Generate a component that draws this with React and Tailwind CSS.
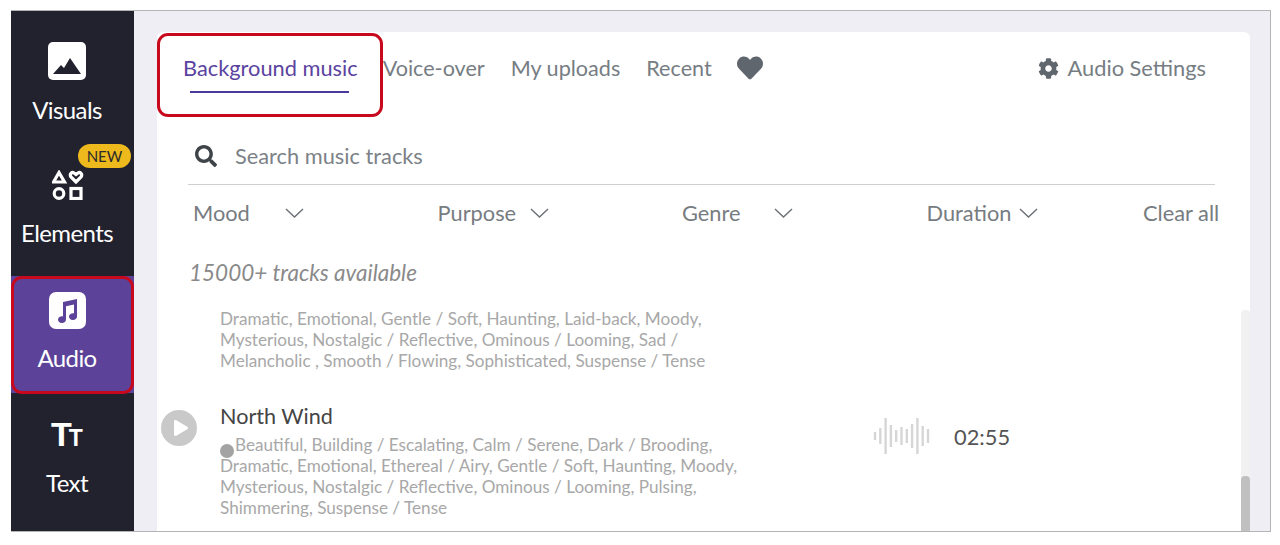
import { FaCog, FaHeart, FaSearch, FaPlay } from 'react-icons/fa';

function Chevron() {
  return (
    <svg width="19" height="10" viewBox="0 0 19 10" fill="none" stroke="#6b7076" strokeWidth="1.4">
      <path d="M1 1l8.5 8L18 1" />
    </svg>
  );
}

function VisualsIcon() {
  return (
    <svg width="38" height="38" viewBox="0 0 38 38">
      <rect width="38" height="38" rx="5" fill="#fff" />
      <path d="M5 32l8-9 3 3 6-10 11 16z" fill="#22222e" />
    </svg>
  );
}

function ElementsIcon() {
  return (
    <svg width="32" height="30" viewBox="0 0 32 30" fill="none" stroke="#fff" strokeWidth="3.2" className="translate-x-[1px]">
      <path d="M7 2.5L12.5 12h-11z" />
      <path d="M24 12l-5-5c-2-3 1-5.5 3-4l2 1.5 2-1.5c2-1.500 5 1 3 4z" />
      <circle cx="7" cy="23.500" r="4.800" />
      <rect x="19" y="18.500" width="10" height="10" />
    </svg>
  );
}

function AudioIcon() {
  return (
    <svg width="37" height="37" viewBox="0 0 37 37">
      <rect width="37" height="37" rx="7" fill="#fff" />
      <path
        d="M14 10l14-3v17.500a4 3.400 0 1 1-3-3.200V12.400l-8 1.800v13.300a4 3.400 0 1 1-3-3.200z"
        fill="#5c4399"
      />
    </svg>
  );
}

function TextIcon() {
  return (
    <span className="flex items-baseline font-['Liberation_Sans',sans-serif] font-bold leading-[26px] text-white">
      <span className="text-[34px] tracking-[-3px]">T</span>
      <span className="text-[23px]">T</span>
    </span>
  );
}

function SideItem({ icon, label, active, badge, slot }) {
  return (
    <div
      className={`relative flex h-[117px] flex-col items-center pr-[11px] text-white ${active ? 'bg-[#5c4399]' : ''}`}
    >
      <div className={`flex items-end justify-center ${slot}`}>{icon}</div>
      <div className="mt-[14px] text-[24px] leading-[26px] tracking-[-0.6px]">{label}</div>
      {badge && (
        <span className="absolute right-[3px] top-[-7px] flex h-[24px] w-[53px] items-center justify-center rounded-full bg-[#eeb91c] text-[15px] text-[#2b2b2b]">
          {badge}
        </span>
      )}
    </div>
  );
}

function Filter({ label }) {
  return (
    <div className="flex w-[244.5px] items-center">
      <span className="w-[92px] shrink-0">{label}</span>
      <Chevron />
    </div>
  );
}

function Wave() {
  const bars = [8, 16, 36, 22, 12, 18, 14, 24, 36, 20, 14];
  return (
    <svg width="57" height="38" viewBox="0 0 57 38" stroke="#d6d6d6" strokeWidth="2.4">
      {bars.map((h, i) => (
        <line key={i} x1={2 + i * 5.3} x2={2 + i * 5.3} y1={19 - h / 2} y2={19 + h / 2} />
      ))}
    </svg>
  );
}

export default function App() {
  return (
    <div className="h-[545px] bg-white pl-[11px] pt-[10px] font-['Lato','Liberation_Sans',sans-serif]">
      <div className="relative flex h-[522px] w-[1260px] border-y border-r border-[#b4b4b4]">
        <aside className="flex w-[123px] shrink-0 flex-col gap-[8px] bg-[#22222e] pt-[15px]">
          <SideItem icon={<VisualsIcon />} label="Visuals" slot="h-[57px] pb-[3px]" />
          <SideItem icon={<ElementsIcon />} label="Elements" badge="NEW" slot="h-[55px] pb-[6px]" />
          <SideItem icon={<AudioIcon />} label="Audio" active slot="h-[55px] pb-[2px]" />
          <SideItem icon={<TextIcon />} label="Text" slot="h-[55px] pb-[5px]" />
        </aside>

        <main className="flex min-w-0 flex-1 bg-[#eeeef4] pl-[23px] pr-[20px] pt-[21px]">
          <div className="flex min-w-0 flex-1 rounded-t-md bg-white">
            <div className="min-w-0 flex-1">
              <nav className="flex h-[63px] items-center pl-[26px] pr-[35px] pt-[9px] text-[21.6px] text-[#767d83]">
                <div className="relative mr-[25px] text-[21.8px] text-[#5b43a0]">
                  Background music
                  <span className="absolute left-[7px] top-[39px] h-[2px] w-[159px] bg-[#4b3a9c]" />
                </div>
                <span className="mr-[26px]">Voice-over</span>
                <span className="mr-[26px]">My uploads</span>
                <span className="mr-[25px]">Recent</span>
                <FaHeart size={26} className="text-[#5f666d]" />
                <span className="ml-auto flex items-center gap-[9px] text-[21.8px]">
                  <FaCog size={21} className="text-[#5f666d]" />
                  Audio Settings
                </span>
              </nav>

              <div className="mx-[31px] mt-[33px] flex h-[57px] w-[1027px] items-center gap-[18px] border-b border-[#cfcfcf] pl-[7px] text-[21.8px] text-[#7c8287]">
                <FaSearch size={22} className="text-[#3f4449]" />
                Search music tracks
              </div>

              <div className="ml-[36px] flex h-[56px] items-center text-[21.8px] text-[#777c81]">
                <Filter label="Mood" />
                <Filter label="Purpose" />
                <Filter label="Genre" />
                <Filter label="Duration" />
                <span className="ml-[-28px]">Clear all</span>
              </div>

              <p className="ml-[32px] mt-[19px] text-[22.5px] italic leading-[26px] text-[#8a8a8a]">
                15000+ tracks available
              </p>

              <p className="ml-[63px] mt-[22px] w-[505px] text-[17.15px] leading-[21px] text-[#a8a8a8]">
                Dramatic, Emotional, Gentle / Soft, Haunting, Laid-back, Moody, Mysterious, Nostalgic / Reflective, Ominous / Looming, Sad / Melancholic , Smooth / Flowing, Sophisticated, Suspense / Tense
              </p>

              <div className="mt-[31px] flex">
                <div className="ml-[4px] mt-[8px] flex h-[36px] w-[36px] shrink-0 items-center justify-center rounded-full bg-[#c9c9c9] pl-[3px]">
                  <FaPlay size={16} className="text-white" />
                </div>
                <div className="ml-[23px] w-[530px] shrink-0">
                  <h3 className="text-[21.6px] leading-[28px] text-[#444]">North Wind</h3>
                  <p className="mt-[4px] text-[17.15px] leading-[21px] text-[#a8a8a8]">
                    <span className="mr-px inline-block h-[14px] w-[14px] translate-y-[7px] rounded-full bg-[#a3a3a3]" />
                    Beautiful, Building / Escalating, Calm / Serene, Dark / Brooding, Dramatic, Emotional, Ethereal / Airy, Gentle / Soft, Haunting, Moody, Mysterious, Nostalgic / Reflective, Ominous / Looming, Pulsing, Shimmering, Suspense / Tense
                  </p>
                </div>
                <div className="ml-[123px] mt-[15px] shrink-0">
                  <Wave />
                </div>
                <span className="ml-[24px] mt-[21px] text-[21.8px] leading-[28px] text-[#555]">02:55</span>
              </div>
            </div>

            <div className="mt-[278px] flex w-[9px] shrink-0 flex-col justify-end rounded-t bg-[#f1f1f1]">
              <div className="h-[55px] rounded-t bg-[#c0c0c0]" />
            </div>
          </div>
        </main>

        {/* red highlight boxes */}
        <div className="absolute left-[146px] top-[22px] h-[84px] w-[226px] rounded-[11px] border-[3px] border-[#c8081c]" />
        <div className="absolute left-0 top-[265px] h-[118px] w-[123px] rounded-[11px] border-[3px] border-[#c8081c]" />
      </div>
    </div>
  );
}
